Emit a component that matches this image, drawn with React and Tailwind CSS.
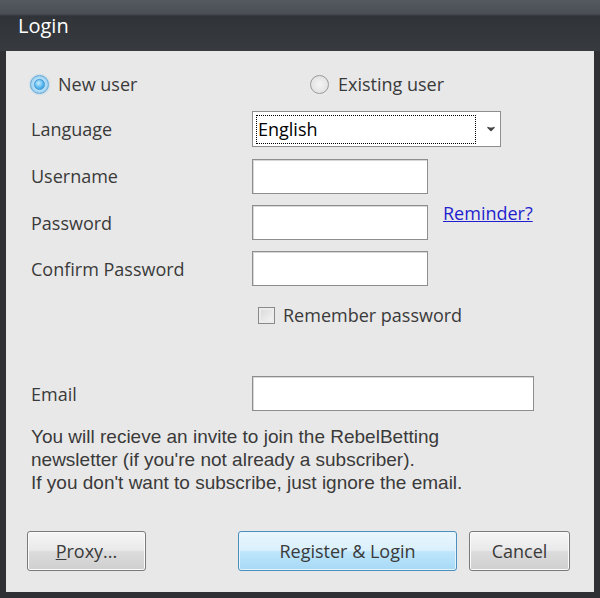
import { ChevronDown } from 'lucide-react'

const LABEL = "font-['Open_Sans','Noto_Sans',sans-serif] text-[18px] leading-[24px] text-[#3a3a3a]"

function Radio({ checked, label }) {
  return (
    <label className="flex items-center gap-[9px]">
      <span
        className={`flex h-[19px] w-[19px] items-center justify-center rounded-full border ${
          checked
            ? 'border-[#6aa9d6] bg-[radial-gradient(circle,#dff3ff_0%,#a8d8f5_60%,#7bbbe3_100%)] shadow-[0_0_2px_#8cc8ee]'
            : 'border-[#9a9a9a] bg-[radial-gradient(circle,#f4f4f4_0%,#dcdcdc_100%)]'
        }`}
      >
        {checked && (
          <span className="h-[11px] w-[11px] rounded-full border border-[#3f98d6] bg-[radial-gradient(circle_at_40%_35%,#c8efff_0%,#5ab8ee_55%,#2b8fd4_100%)]" />
        )}
      </span>
      <span className={LABEL}>{label}</span>
    </label>
  )
}

function Field({ className = 'w-[176px]' }) {
  return <div className={`h-[35px] border border-[#8e8e8e] bg-white shadow-[inset_1px_1px_0_#d8d8d8] ${className}`} />
}

function Button({ children, primary, className }) {
  return (
    <button
      type="button"
      className={`flex h-[40px] items-center justify-center rounded-[3px] border font-['Open_Sans','Noto_Sans',sans-serif] text-[18px] text-[#3a3a3a] ${
        primary
          ? 'border-[#4b8fbf] bg-[linear-gradient(#eaf6fd_0%,#d9f0fc_48%,#bee6fd_52%,#a7d9f5_100%)] shadow-[inset_0_0_0_1px_#e6f5fd]'
          : 'border-[#7a7a7a] bg-[linear-gradient(#f6f6f6_0%,#e9e9e9_48%,#dcdcdc_52%,#cfcfcf_100%)] shadow-[inset_0_0_0_1px_#fbfbfb]'
      } ${className}`}
    >
      {children}
    </button>
  )
}

export default function App() {
  return (
    <div className="flex h-[598px] w-[600px] flex-col bg-[#2e3034]">
      <div className="flex h-[51px] items-start bg-[linear-gradient(#555a61_0px,#4a4e55_14px,#303338_16px,#373a3f_50px)] pl-[18px] pt-[13px]">
        <span className="font-['Open_Sans','Noto_Sans',sans-serif] text-[20px] leading-[26px] text-white">Login</span>
      </div>

      <div className="mx-[6px] mb-[6px] flex flex-1 flex-col bg-[#e8e8e8] pl-[25px] pr-[24px]">
        <div className="mt-[23px] flex h-[20px] items-center">
          <div className="w-[279px]">
            <div className="-ml-[1px]">
              <Radio checked label="New user" />
            </div>
          </div>
          <Radio label="Existing user" />
        </div>

        <div className="mt-[17px] grid grid-cols-[221px_1fr] items-center gap-y-[11px]">
          <span className={LABEL}>Language</span>
          <div className="relative flex h-[36px] w-[249px] items-center border border-[#8e8e8e] bg-white pl-[3px]">
            <div className="flex h-[29px] w-[220px] items-center border border-dotted border-black pl-[1px]">
              <span className="font-['Open_Sans','Noto_Sans',sans-serif] text-[18px] text-black">English</span>
            </div>
            <ChevronDown className="ml-[9px] h-[12px] w-[12px] fill-[#444] text-[#444]" strokeWidth={3} />
          </div>

          <span className={LABEL}>Username</span>
          <div className="pt-[1px]">
            <Field />
          </div>

          <span className={LABEL}>Password</span>
          <div className="flex items-center gap-[15px]">
            <Field />
            <a className="-mt-[20px] font-['Open_Sans','Noto_Sans',sans-serif] text-[18px] leading-[24px] text-[#1f1fcf] underline">Reminder?</a>
          </div>

          <span className={LABEL}>Confirm Password</span>
          <Field />
        </div>

        <div className="mt-[17px] flex items-center gap-[8px] pl-[227px]">
          <span className="h-[17px] w-[17px] border border-[#8a8a8a] bg-[linear-gradient(135deg,#d8d8d8,#f6f6f6)] shadow-[inset_0_0_0_2px_#ececec]" />
          <span className={LABEL}>Remember password</span>
        </div>

        <div className="mt-[49px] grid grid-cols-[221px_1fr] items-center">
          <span className={LABEL}>Email</span>
          <Field className="w-[282px]" />
        </div>

        <p className="mt-[14px] font-['Liberation_Sans',sans-serif] text-[19px] leading-[23px] text-[#3a3a3a]">
          You will recieve an invite to join the RebelBetting
          <br />
          newsletter (if you're not already a subscriber).
          <br />
          If you don't want to subscribe, just ignore the email.
        </p>

        <div className="mt-[37px] flex items-center">
          <Button className="-ml-[4px] w-[119px]">
            <span>
              <span className="underline">P</span>roxy...
            </span>
          </Button>
          <Button primary className="ml-[92px] w-[219px]">Register &amp; Login</Button>
          <Button className="ml-[12px] w-[101px]">Cancel</Button>
        </div>
      </div>
    </div>
  )
}
